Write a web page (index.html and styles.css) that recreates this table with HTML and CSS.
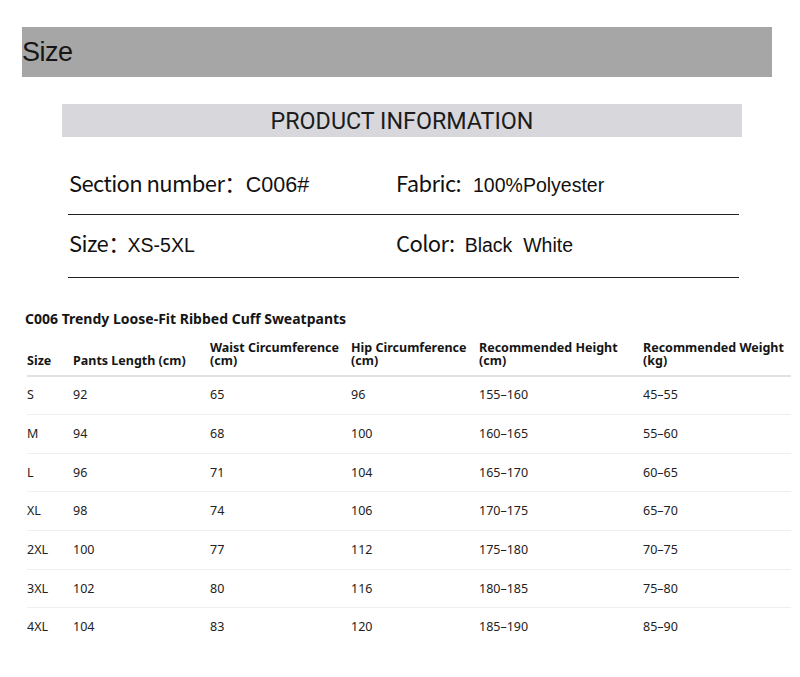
FILE: index.html
```html
<!DOCTYPE html>
<html>
<head>
<meta charset="utf-8">
<link rel="stylesheet" href="styles.css">
</head>
<body>
<div class="size-bar">Size</div>
<div class="info-bar">PRODUCT INFORMATION</div>
<div class="specs">
  <div class="spec-row first">
    <div class="spec"><span class="label">Section number：</span><span class="value wide">C006#</span></div>
    <div class="spec"><span class="label">Fabric:</span><span class="value">100%Polyester</span></div>
  </div>
  <div class="spec-row second">
    <div class="spec"><span class="label">Size：</span><span class="value after-wide">XS-5XL</span></div>
    <div class="spec"><span class="label">Color:</span><span class="value color-val">Black&nbsp; White</span></div>
  </div>
</div>
<h2 class="table-title">C006 Trendy Loose-Fit Ribbed Cuff Sweatpants</h2>
<table class="size-table">
  <colgroup>
    <col class="c1"><col class="c2"><col class="c3"><col class="c4"><col class="c5"><col class="c6">
  </colgroup>
  <thead>
    <tr><th>Size</th><th>Pants Length (cm)</th><th>Waist Circumference (cm)</th><th>Hip Circumference (cm)</th><th>Recommended Height (cm)</th><th>Recommended Weight (kg)</th></tr>
  </thead>
  <tbody>
    <tr><td>S</td><td>92</td><td>65</td><td>96</td><td>155–160</td><td>45–55</td></tr>
    <tr><td>M</td><td>94</td><td>68</td><td>100</td><td>160–165</td><td>55–60</td></tr>
    <tr><td>L</td><td>96</td><td>71</td><td>104</td><td>165–170</td><td>60–65</td></tr>
    <tr><td>XL</td><td>98</td><td>74</td><td>106</td><td>170–175</td><td>65–70</td></tr>
    <tr><td>2XL</td><td>100</td><td>77</td><td>112</td><td>175–180</td><td>70–75</td></tr>
    <tr><td>3XL</td><td>102</td><td>80</td><td>116</td><td>180–185</td><td>75–80</td></tr>
    <tr><td>4XL</td><td>104</td><td>83</td><td>120</td><td>185–190</td><td>85–90</td></tr>
  </tbody>
</table>
</body>
</html>
```
FILE: styles.css
```css
html, body {
  margin: 0;
  padding: 0;
  background: #ffffff;
}
body {
  width: 800px;
  height: 677px;
  overflow: hidden;
  color: #1a1a1a;
}
.size-bar {
  margin: 27px 28px 0 22px;
  height: 50px;
  background: #a6a6a6;
  font-family: "Liberation Sans", Arial, sans-serif;
  font-size: 27px;
  line-height: 50px;
  color: #161616;
  letter-spacing: -0.5px;
}
.info-bar {
  margin: 27px 58px 0 62px;
  height: 33px;
  background: #d8d8dc;
  font-family: Roboto, "Liberation Sans", sans-serif;
  font-size: 23.3px;
  line-height: 35px;
  text-align: center;
  color: #1c1c1c;
}
.specs {
  margin: 28px 61px 0 68px;
}
.spec-row {
  display: grid;
  grid-template-columns: 327px 1fr;
  border-bottom: 1.5px solid #222;
  align-items: center;
}
.spec-row.first {
  height: 33px;
  padding-bottom: 16px;
}
.spec-row.second {
  height: 51px;
  padding-top: 1px;
  padding-bottom: 10px;
}
.spec {
  display: flex;
  align-items: baseline;
  padding-left: 1px;
}
.label {
  font-family: "Noto Sans CJK SC", "Noto Sans", sans-serif;
  font-size: 22px;
  color: #111;
  letter-spacing: -0.6px;
}
.value {
  font-family: "Liberation Sans", Arial, sans-serif;
  font-size: 19.5px;
  color: #111;
  margin-left: 12px;
}
.value.wide {
  font-size: 21.5px;
  margin-left: 0;
}
.value.after-wide {
  margin-left: -2px;
}
.value.color-val {
  margin-left: 10px;
}
.table-title {
  margin: 32px 0 0 25px;
  font-family: "Noto Sans", "Open Sans", sans-serif;
  font-weight: bold;
  font-size: 14px;
  line-height: 18px;
  color: #151515;
}
.size-table {
  margin: 12.5px 0 0 27px;
  border-collapse: collapse;
  table-layout: fixed;
  width: 764px;
  font-family: "Noto Sans", "Open Sans", sans-serif;
  font-size: 12.5px;
  color: #222;
}
.c1 { width: 46px; }
.c2 { width: 137px; }
.c3 { width: 141px; }
.c4 { width: 128px; }
.c5 { width: 164px; }
.c6 { width: 148px; }
.size-table th {
  text-align: left;
  vertical-align: bottom;
  font-weight: bold;
  line-height: 13.5px;
  padding: 0 0 7px 0;
  border-bottom: 2px solid #e2e2e2;
  color: #151515;
}
.size-table td {
  height: 37.67px;
  padding: 0;
  line-height: 14px;
  border-bottom: 1px solid #efefef;
  vertical-align: middle;
}
.size-table tbody tr:last-child td {
  border-bottom: none;
}
```
